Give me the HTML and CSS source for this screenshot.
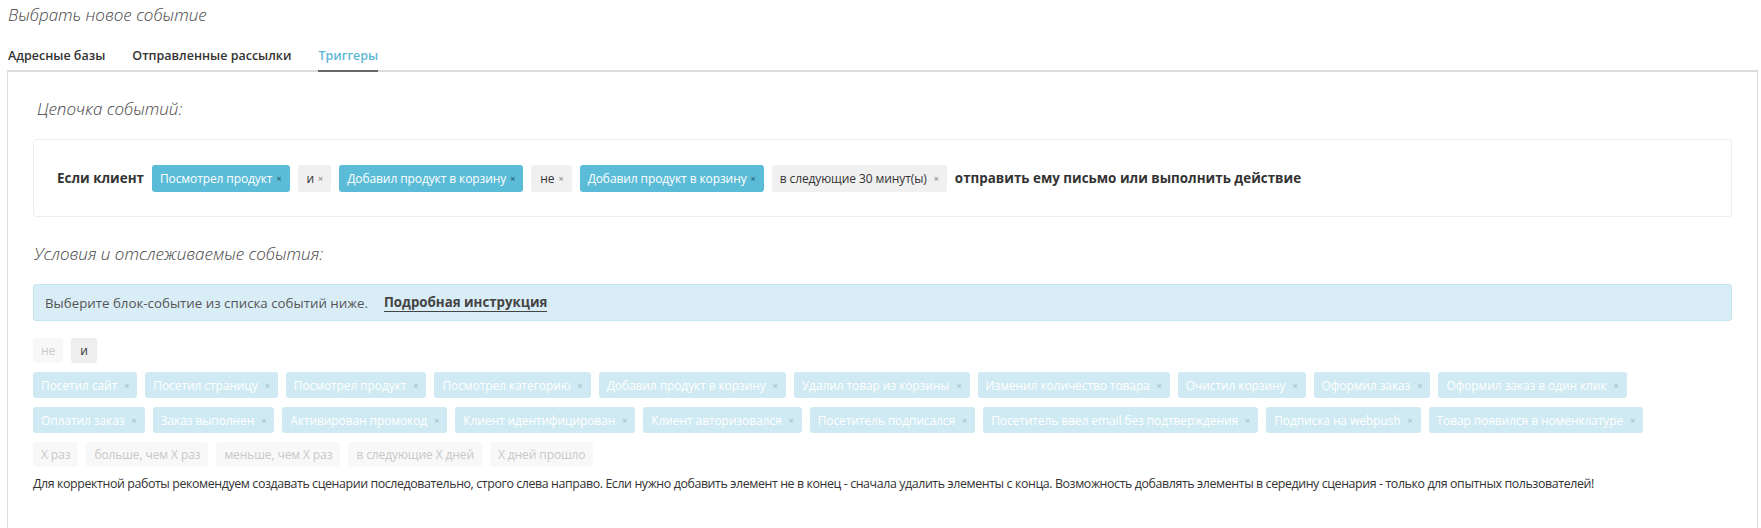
FILE: index.html
```html
<!DOCTYPE html>
<html lang="ru">
<head>
<meta charset="utf-8">
<title>Выбрать новое событие</title>
<link rel="stylesheet" href="styles.css">
</head>
<body>
<div class="page">
  <h1 class="page-title">Выбрать новое событие</h1>
  <nav class="tabs">
    <a class="tab">Адресные базы</a>
    <a class="tab">Отправленные рассылки</a>
    <a class="tab active">Триггеры</a>
  </nav>
  <section class="panel">
    <h2 class="section-title">Цепочка событий:</h2>
    <div class="chain">
      <b class="chain-text">Если клиент</b>
      <span class="chip chip-blue">Посмотрел продукт<span class="x">×</span></span>
      <span class="chip chip-gray">и<span class="x">×</span></span>
      <span class="chip chip-blue">Добавил продукт в корзину<span class="x">×</span></span>
      <span class="chip chip-gray">не<span class="x">×</span></span>
      <span class="chip chip-blue">Добавил продукт в корзину<span class="x">×</span></span>
      <span class="chip chip-gray chip-wide">в следующие 30 минут(ы)<span class="x">×</span></span>
      <b class="chain-text">отправить ему письмо или выполнить действие</b>
    </div>
    <h2 class="section-title second">Условия и отслеживаемые события:</h2>
    <div class="alert">Выберите блок-событие из списка событий ниже.<a class="alert-link">Подробная инструкция</a></div>
    <div class="row row-ops">
      <span class="chip chip-faint">не</span>
      <span class="chip chip-op">и</span>
    </div>
    <div class="row">
      <span class="chip chip-light">Посетил сайт<span class="x">×</span></span>
      <span class="chip chip-light">Посетил страницу<span class="x">×</span></span>
      <span class="chip chip-light">Посмотрел продукт<span class="x">×</span></span>
      <span class="chip chip-light">Посмотрел категорию<span class="x">×</span></span>
      <span class="chip chip-light">Добавил продукт в корзину<span class="x">×</span></span>
      <span class="chip chip-light">Удалил товар из корзины<span class="x">×</span></span>
      <span class="chip chip-light">Изменил количество товара<span class="x">×</span></span>
      <span class="chip chip-light">Очистил корзину<span class="x">×</span></span>
      <span class="chip chip-light">Оформил заказ<span class="x">×</span></span>
      <span class="chip chip-light">Оформил заказ в один клик<span class="x">×</span></span>
    </div>
    <div class="row">
      <span class="chip chip-light">Оплатил заказ<span class="x">×</span></span>
      <span class="chip chip-light">Заказ выполнен<span class="x">×</span></span>
      <span class="chip chip-light">Активирован промокод<span class="x">×</span></span>
      <span class="chip chip-light">Клиент идентифицирован<span class="x">×</span></span>
      <span class="chip chip-light">Клиент авторизовался<span class="x">×</span></span>
      <span class="chip chip-light">Посетитель подписался<span class="x">×</span></span>
      <span class="chip chip-light">Посетитель ввел email без подтверждения<span class="x">×</span></span>
      <span class="chip chip-light">Подписка на webpush<span class="x">×</span></span>
      <span class="chip chip-light">Товар появился в номенклатуре<span class="x">×</span></span>
    </div>
    <div class="row">
      <span class="chip chip-faint">X раз</span>
      <span class="chip chip-faint">больше, чем X раз</span>
      <span class="chip chip-faint">меньше, чем X раз</span>
      <span class="chip chip-faint">в следующие X дней</span>
      <span class="chip chip-faint">X дней прошло</span>
    </div>
    <p class="note">Для корректной работы рекомендуем создавать сценарии последовательно, строго слева направо. Если нужно добавить элемент не в конец - сначала удалить элементы с конца. Возможность добавлять элементы в середину сценария - только для опытных пользователей!</p>
  </section>
</div>
</body>
</html>
```

FILE: styles.css
```css
* { box-sizing: border-box; }
html, body { margin: 0; padding: 0; background: #fff; }
body {
  font-family: "Open Sans", "Noto Sans", "DejaVu Sans", sans-serif;
  font-size: 13px;
  color: #333;
}
.page { padding: 0 3px 0 7px; }
.page-title {
  margin: 0;
  padding: 3px 0 0 1px;
  font-size: 17px;
  line-height: 24px;
  font-weight: 300;
  font-style: italic;
  color: #444;
}
.tabs {
  display: flex;
  gap: 27px;
  padding-left: 1px;
  margin-top: 19px;
}
.tab {
  font-size: 12.5px;
  font-weight: 600;
  color: #333;
  line-height: 20px;
  padding-bottom: 4px;
  border-bottom: 2px solid transparent;
  position: relative;
  z-index: 1;
}
.tab.active {
  color: #5bb8d6;
  border-bottom-color: #666;
}
.panel {
  margin-top: -2px;
  border: 1px solid #ddd;
  border-top: 2px solid #ddd;
  border-bottom: none;
  padding: 25px 25px 40px 25px;
}
.section-title {
  margin: 0;
  font-size: 17px;
  line-height: 24px;
  font-weight: 300;
  font-style: italic;
  color: #444;
  padding-left: 4px;
}
.section-title.second { margin-top: 25px; padding-left: 1px; }
.chain {
  margin-top: 18px;
  border: 1px solid #eee;
  border-radius: 3px;
  height: 78px;
  display: flex;
  align-items: center;
  gap: 8px;
  padding: 0 0 0 23px;
}
.chain-text { font-weight: 700; font-size: 13.4px; color: #333; }
.chip {
  display: inline-flex;
  align-items: center;
  height: 26px;
  padding: 0 8px;
  border-radius: 3px;
  font-size: 12px;
  letter-spacing: -0.1px;
  white-space: nowrap;
}
.chain .chip { height: 27px; padding: 0 8px 0 8px; }
.x {
  font-size: 9px;
  margin-left: 4px;
  font-weight: 700;
  letter-spacing: 0;
}
.chip-blue { background: #5bbcd8; color: #fff; }
.chip-blue .x { color: #2f6d80; }
.chip-gray { background: #f0f0f0; color: #333; }
.chain .chip-gray { padding: 0 8px 0 9px; }
.chip-gray .x { color: #999; }
.chain .chip-wide { padding: 0 8px; }
.chip-wide .x { margin-left: 7px; }
.alert {
  margin-top: 18px;
  height: 37px;
  display: flex;
  align-items: center;
  padding-left: 11px;
  background: #d9edf7;
  border: 1px solid #c4e6f0;
  border-radius: 3px;
  color: #555;
  font-size: 13.3px;
}
.alert-link {
  margin-left: 16px;
  font-weight: 700;
  color: #444;
  border-bottom: 1px solid #444;
  line-height: 17px;
}
.row {
  display: flex;
  gap: 8px;
  margin-top: 9px;
}
.row-ops { margin-top: 17px; gap: 8px; }
.row-ops .chip { height: 25px; }
.chip-light { background: #cfeaf2; color: #fff; padding: 0 8px 0 8px; }
.chip-light .x { color: #b0c4cc; margin-left: 7px; }
.chip-faint { background: #f8f8f8; color: #c8c8c8; padding: 0 8px; height: 25px; }
.chip-op { background: #eee; color: #333; padding: 0 9px; }
.note {
  margin: 8px 0 0 0;
  font-size: 12.4px;
  letter-spacing: -0.4px;
  line-height: 18px;
  color: #333;
}
```
